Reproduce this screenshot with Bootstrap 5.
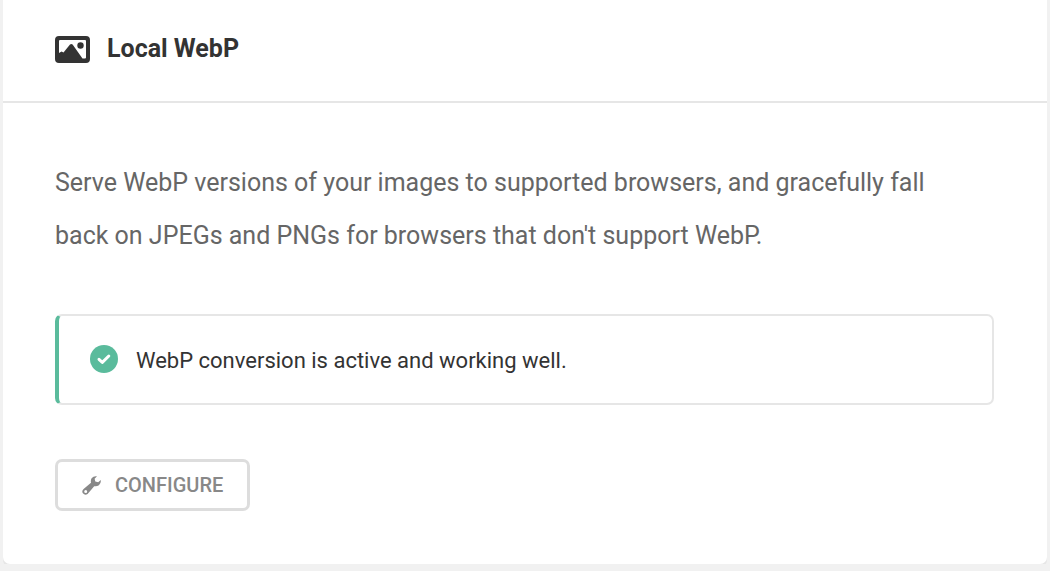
<!DOCTYPE html>
<html lang="en">
<head>
<meta charset="utf-8">
<meta name="viewport" content="width=device-width, initial-scale=1">
<title>Local WebP</title>
<link href="https://cdn.jsdelivr.net/npm/bootstrap@5.3.0/dist/css/bootstrap.min.css" rel="stylesheet">
<style>
  body { background: #f1f1f1; font-family: Roboto, "Liberation Sans", sans-serif; color: #333; }
  .page { padding: 0 3px; }
  .panel { border-radius: 0 0 7px 7px; box-shadow: 0 3px 0 #e6e6e6; }
  .panel-head { padding: 32px 52px 35px; gap: 17px; border-bottom: 2px solid #e6e6e6; }
  .panel-title { font-size: 25px; line-height: 34px; font-weight: 700; }
  .panel-main { padding: 53px 53px 53px 52px; }
  .intro { font-size: 25px; line-height: 53px; color: #666; margin-bottom: 52px; }
  .notice { padding: 28px 32px 25px 31px; gap: 18px; border: 2px solid #e6e6e6; border-left: 4px solid #5abb9c; border-radius: 7px; margin-bottom: 54px; font-size: 22px; line-height: 34px; }
  .btn-ghost { --bs-btn-color: #888; --bs-btn-border-color: #ddd; --bs-btn-border-width: 3px; --bs-btn-border-radius: 7px; --bs-btn-padding-x: 24px; --bs-btn-padding-y: 9px; --bs-btn-font-size: 20px; --bs-btn-line-height: 28px; --bs-btn-font-weight: 500; --bs-btn-hover-color: #666; --bs-btn-hover-border-color: #ccc; gap: 14px; }
</style>
</head>
<body>
<main class="page container-fluid">
  <section class="panel bg-white">
    <header class="panel-head d-flex align-items-center">
      <svg width="35" height="27" viewBox="0 0 35 27" aria-hidden="true">
        <path fill="#333" fill-rule="evenodd" d="M4 0H31Q35 0 35 4V23Q35 27 31 27H4Q0 27 0 23V4Q0 0 4 0ZM5 4Q4 4 4 5V17L6.500 15.500L8.500 16.500L15 8.500Q16.300 7.300 17.600 8.500L27.500 22.500H30Q31 22.500 31 21.500V5Q31 4 30 4Z"/>
        <circle cx="25.500" cy="9.500" r="3.200" fill="#333"/>
      </svg>
      <h1 class="panel-title mb-0">Local WebP</h1>
    </header>
    <div class="panel-main">
      <p class="intro">Serve WebP versions of your images to supported browsers, and gracefully fall<br>
      back on JPEGs and PNGs for browsers that don't support WebP.</p>
      <div class="notice d-flex align-items-start" role="status">
        <svg class="flex-shrink-0" width="28" height="30" viewBox="0 0 28 30" aria-hidden="true">
          <circle cx="14" cy="15" r="14" fill="#5abb9c"/>
          <path d="M9 15.300L12.300 18.300L18.800 12" fill="none" stroke="#fff" stroke-width="3" stroke-linecap="round" stroke-linejoin="round"/>
        </svg>
        <span>WebP conversion is active and working well.</span>
      </div>
      <button type="button" class="btn btn-ghost d-inline-flex align-items-center">
        <svg width="19" height="19" viewBox="0 0 19 19" aria-hidden="true">
          <path fill="#888" fill-rule="evenodd" d="M15 .3Q11.500 -.2 9.600 2.300Q8.400 4.300 9 6.800L1.600 12.900Q-.6 15 .9 17.300Q3 19.800 5.600 17.900L12.200 10.200Q14.800 10.700 16.900 9.200Q19.300 7.200 18.700 4L16.200 6.300L13.300 5.600L12.600 2.800ZM3.700 14A1.500 1.500 0 1 1 3.700 17A1.500 1.500 0 1 1 3.700 14Z"/>
        </svg>
        <span>CONFIGURE</span>
      </button>
    </div>
  </section>
</main>
<script src="https://cdn.jsdelivr.net/npm/bootstrap@5.3.0/dist/js/bootstrap.bundle.min.js"></script>
</body>
</html>
